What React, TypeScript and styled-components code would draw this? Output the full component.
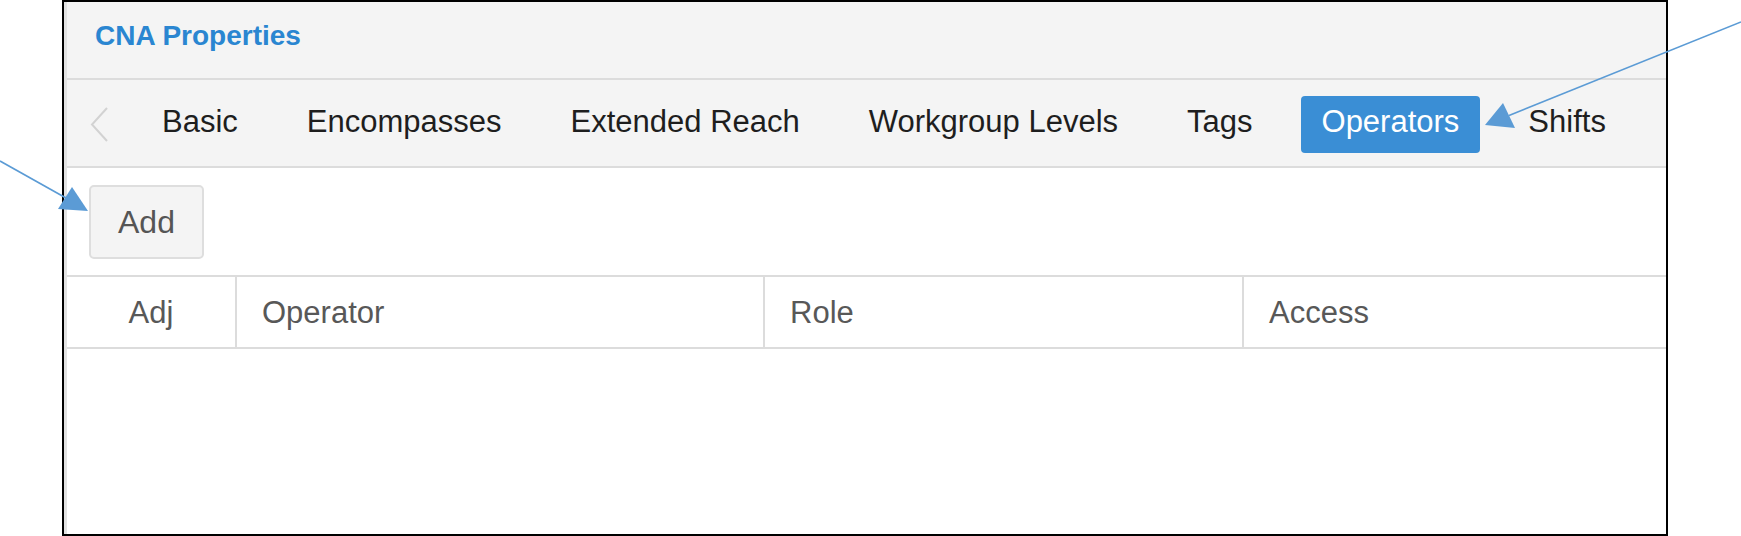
import React from "react";
import styled, { createGlobalStyle } from "styled-components";

const GlobalStyle = createGlobalStyle`
  *, *::before, *::after { box-sizing: border-box; }
  html, body { margin: 0; padding: 0; background: #ffffff; }
  body { font-family: "Liberation Sans", Arial, sans-serif; }
`;

const Page = styled.div`
  position: relative;
  width: 1741px;
  height: 536px;
  padding-left: 62px;
`;

const Frame = styled.div`
  width: 1606px;
  height: 536px;
  border: 2px solid #000;
  background: #fff;
  overflow: hidden;
`;

const Panel = styled.div`
  display: flex;
  flex-direction: column;
  height: 100%;
  border-left: 3px solid #e2e2e2;
`;

const Header = styled.div`
  height: 78px;
  flex: none;
  background: #f4f4f4;
  border-bottom: 2px solid #dcdcdc;
  padding-left: 28px;
`;

const Title = styled.h1`
  margin: 0;
  font-size: 28px;
  font-weight: bold;
  line-height: 68px;
  color: #2a86d1;
`;

const TabBar = styled.div`
  height: 88px;
  flex: none;
  display: flex;
  align-items: center;
  gap: 27px;
  padding: 3px 0 0 22px;
  background: #f4f4f4;
  border-bottom: 2px solid #dcdcdc;
`;

const Chevron = styled.svg`
  width: 20px;
  height: 35px;
  margin-right: 5px;
  flex: none;
`;

const Tab = styled.div<{ $active?: boolean }>`
  height: 57px;
  padding: 0 21px 5px;
  line-height: 52px;
  font-size: 31px;
  white-space: nowrap;
  border-radius: 4px;
  color: ${(p) => (p.$active ? "#ffffff" : "#1e1e1e")};
  background: ${(p) => (p.$active ? "#3a8ed5" : "transparent")};
`;

const Toolbar = styled.div`
  flex: none;
  display: flex;
  padding: 17px 0 16px 22px;
`;

const AddButton = styled.button`
  height: 74px;
  padding: 0 27px;
  font-family: "Liberation Sans", Arial, sans-serif;
  font-size: 32px;
  color: #555;
  background: #f4f4f4;
  border: 2px solid #dedede;
  border-radius: 5px;
`;

const HeadRow = styled.div`
  flex: none;
  height: 74px;
  display: grid;
  grid-template-columns: 168px 528px 479px 1fr;
  border-top: 2px solid #dcdcdc;
  border-bottom: 2px solid #dcdcdc;
`;

const HeadCell = styled.div<{ $center?: boolean }>`
  line-height: 72px;
  font-size: 31px;
  color: #585858;
  white-space: nowrap;
  text-align: ${(p) => (p.$center ? "center" : "left")};
  padding-left: ${(p) => (p.$center ? "0" : "25px")};
  border-left: ${(p) => (p.$center ? "none" : "2px solid #dcdcdc")};
`;

const Body = styled.div`
  flex: 1;
  background: #fff;
`;

const Annotations = styled.svg`
  position: absolute;
  left: 0;
  top: 0;
  width: 1741px;
  height: 536px;
  pointer-events: none;
`;

const tabs = [
  "Basic",
  "Encompasses",
  "Extended Reach",
  "Workgroup Levels",
  "Tags",
  "Operators",
  "Shifts",
];

export default function App() {
  return (
    <>
      <GlobalStyle />
      <Page>
        <Frame>
          <Panel>
            <Header>
              <Title>CNA Properties</Title>
            </Header>
            <TabBar>
              <Chevron viewBox="0 0 20 35">
                <polyline
                  points="18,1 3,17.5 18,34"
                  fill="none"
                  stroke="#d2d2d2"
                  strokeWidth="2"
                />
              </Chevron>
              {tabs.map((t) => (
                <Tab key={t} $active={t === "Operators"}>
                  {t}
                </Tab>
              ))}
            </TabBar>
            <Toolbar>
              <AddButton>Add</AddButton>
            </Toolbar>
            <HeadRow>
              <HeadCell $center>Adj</HeadCell>
              <HeadCell>Operator</HeadCell>
              <HeadCell>Role</HeadCell>
              <HeadCell>Access</HeadCell>
            </HeadRow>
            <Body />
          </Panel>
        </Frame>
        <Annotations viewBox="0 0 1741 536">
          <line x1="0" y1="161" x2="66" y2="198" stroke="#5b9bd5" strokeWidth="1.6" />
          <polygon points="88,211 58,209 72,187" fill="#5b9bd5" />
          <line x1="1741" y1="22" x2="1509" y2="115.5" stroke="#5b9bd5" strokeWidth="1.6" />
          <polygon points="1485,125 1503,103 1515,128" fill="#5b9bd5" />
        </Annotations>
      </Page>
    </>
  );
}
